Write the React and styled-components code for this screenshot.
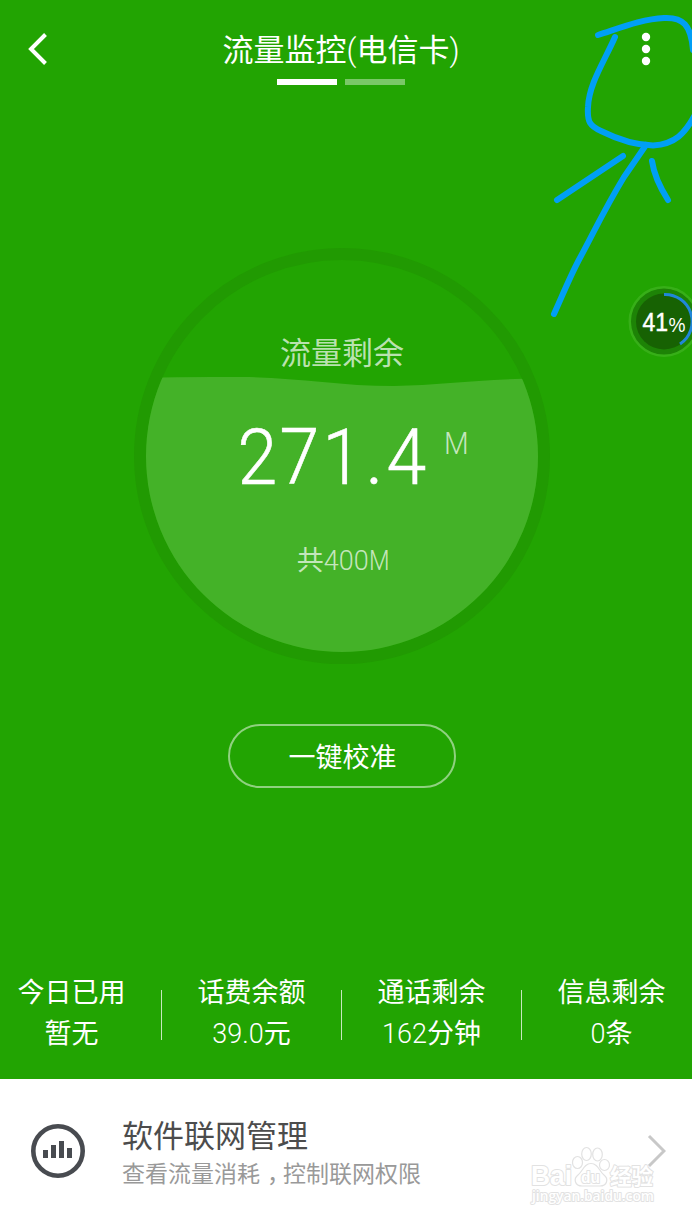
import React from "react";
import styled, { createGlobalStyle } from "styled-components";

const GlobalStyle = createGlobalStyle`
  * { box-sizing: border-box; }
  body {
    margin: 0;
    overflow: hidden;
    background: #fff;
    font-family: Roboto, "Noto Sans CJK SC", sans-serif;
  }
`;

const Screen = styled.main`
  position: relative;
  width: 692px;
  height: 1222px;
  overflow: hidden;
  display: flex;
  justify-content: center;
  color: #fff;
`;

const Page = styled.div`
  flex: none;
  width: 720px;
  margin-right: 8px;
  height: 100%;
  display: flex;
  flex-direction: column;
`;

const Monitor = styled.section`
  height: 1079px;
  flex: none;
  background: #22a402;
  display: flex;
  flex-direction: column;
  align-items: center;
`;

const Header = styled.header`
  width: 100%;
  height: 98px;
  padding: 0 50px 0 46px;
  display: grid;
  grid-template-columns: 60px 1fr 60px;
  align-items: center;
`;

const IconButton = styled.button`
  display: flex;
  justify-content: ${(p) => p.$align || "flex-start"};
  padding: 0;
  border: 0;
  background: none;
`;

const TitleBlock = styled.div`
  height: 98px;
  padding-top: 31px;
  display: flex;
  flex-direction: column;
  align-items: center;
  margin-left: 2px;
`;

const Title = styled.h1`
  margin: 0;
  font-size: 31px;
  line-height: 40px;
  font-weight: 400;
  white-space: nowrap;
`;

const Paren = styled.span`
  font-weight: 300;
`;

const Pager = styled.div`
  display: flex;
  gap: 8px;
  margin-top: 8px;
`;

const PagerBar = styled.span`
  width: 60px;
  height: 6px;
  background: ${(p) => (p.$active ? "#fff" : "#7ac867")};
`;

const Gauge = styled.div`
  display: grid;
  width: 416px;
  height: 416px;
  margin-top: 150px;
  > * { grid-area: 1 / 1; }
`;

const GaugeContent = styled.div`
  z-index: 1;
  display: flex;
  flex-direction: column;
  align-items: center;
`;

const GaugeLabel = styled.div`
  margin-top: 86px;
  font-size: 31px;
  line-height: 40px;
  color: rgba(255, 255, 255, 0.7);
`;

const Amount = styled.div`
  display: flex;
  align-items: flex-start;
  height: 80px;
  margin: 43px 0 0 21px;
  font-size: 77px;
  line-height: 83px;
  font-weight: 300;
`;

const Digits = styled.span`
  display: flex;
  -webkit-text-stroke: 0.6px #fff;
`;

const Digit = styled.span`
  width: 42.5px;
  text-align: center;
  transform: scaleX(0.93);
`;

const Point = styled.span`
  width: 22px;
  padding-left: 1px;
  text-align: center;
`;

const Unit = styled.span`
  margin: 9px 0 0 15px;
  font-size: 31px;
  line-height: 36px;
  color: rgba(255, 255, 255, 0.7);
  transform: scaleX(0.92);
`;

const Total = styled.div`
  margin: 46px 0 0 2px;
  font-size: 27px;
  line-height: 36px;
  color: rgba(255, 255, 255, 0.7);
`;

const NarrowM = styled.span`
  display: inline-block;
  margin-right: -3px;
  transform: scaleX(0.88);
  transform-origin: left;
`;

const Light = styled.span`
  font-weight: 300;
`;

const CalibrateButton = styled.button`
  width: 228px;
  height: 64px;
  margin-top: 60px;
  padding: 5px 0 0 1px;
  border: 2px solid #90d180;
  border-radius: 32px;
  background: none;
  color: #fff;
  font: 400 27px/55px Roboto, "Noto Sans CJK SC", sans-serif;
`;

const Stats = styled.div`
  width: 100%;
  margin-top: auto;
  height: 109px;
  display: grid;
  grid-template-columns: repeat(4, 1fr);
`;

const Stat = styled.div`
  display: flex;
  align-items: flex-start;
  justify-content: center;
  &::after {
    content: "";
    flex: none;
    width: 1px;
    height: 50px;
    margin-top: 20px;
    background: ${(p) => (p.$last ? "transparent" : "rgba(255,255,255,.75)")};
  }
`;

const StatText = styled.div`
  flex: 1;
  padding-top: 3px;
  text-align: center;
  font-size: 27px;
  line-height: 41px;
`;

const Manage = styled.section`
  flex: 1;
  padding: 0 36px 0 49px;
  display: flex;
  align-items: center;
  background: #fff;
`;

const ManageText = styled.div`
  flex: 1;
  margin: 8px 0 0 37px;
`;

const ManageTitle = styled.h2`
  margin: 0;
  font-size: 31px;
  line-height: 40px;
  font-weight: 400;
  color: #4c4c4c;
`;

const ManageHint = styled.p`
  margin: 0;
  font-size: 23px;
  line-height: 35px;
  color: #999;
`;

const Comma = styled.span`
  display: inline-block;
  width: 23px;
  text-indent: 7px;
  font-feature-settings: "halt";
`;

const Overlay = styled.svg`
  position: absolute;
  left: ${(p) => p.$x}px;
  top: ${(p) => p.$y}px;
  pointer-events: none;
`;

const OutlinedText = styled.text`
  font-family: ${(p) => p.$font}, sans-serif;
  font-weight: ${(p) => p.$weight || 700};
  font-size: ${(p) => p.$size}px;
  stroke-width: 2px;
  stroke-linejoin: round;
  paint-order: stroke fill;
`;

const stats = [
  { label: "今日已用", number: "", unit: "暂无" },
  { label: "话费余额", number: "39.0", unit: "元" },
  { label: "通话剩余", number: "162", unit: "分钟" },
  { label: "信息剩余", number: "0", unit: "条" },
];

function GaugeDial() {
  return (
    <svg width="416" height="416" viewBox="0 0 416 416">
      <defs>
        <clipPath id="dial"><circle cx="208" cy="208" r="196" /></clipPath>
      </defs>
      <circle cx="208" cy="208" r="202" fill="none" stroke="#219a02" strokeWidth="12" />
      <path
        clipPath="url(#dial)"
        fill="#44b228"
        d="M0 130 Q30 129 78 129 H108 C160 129 205 138 260 138 C310 137 350 131 416 130 V416 H0Z"
      />
    </svg>
  );
}

function Scribble() {
  return (
    <Overlay $x={530} $y={0} width="162" height="330" fill="none" stroke="#009ff5" strokeWidth="6" strokeLinecap="round" strokeLinejoin="round">
      <path d="M68 35 C90 28 112 19 134 18 C153 17 161 25 163 50" />
      <path d="M85 37 C74 62 59 84 58 107 C57 122 60 126 71 131 C85 138 104 145 123 145.500 C145 144 155 134 166 113" />
      <path d="M116 145 L94 177 C74 210 64 232 51 256 C41 274 34 292 24 314" />
      <path d="M93 156 L69 172 L27 200" />
      <path d="M122 161 C124 175 131 189 138 200" />
    </Overlay>
  );
}

function FloatingBall() {
  return (
    <Overlay $x={626} $y={283} width="66" height="78">
      <circle cx="38" cy="38.500" r="34" fill="none" stroke="#48b82b" strokeOpacity=".55" strokeWidth="3" />
      <circle cx="38" cy="38.500" r="33" fill="#1d8306" />
      <circle cx="38" cy="38.500" r="28" fill="#176203" />
      <path d="M38 11.500 A27 27 0 0 1 54 61" fill="none" stroke="#2087d8" strokeWidth="3" />
      <text x="16.500" y="48" fill="#fff" fontFamily="Liberation Sans, sans-serif" fontSize="25" textLength="25.500" lengthAdjust="spacingAndGlyphs" stroke="#fff" strokeWidth=".5">41</text>
      <text x="42.500" y="49" fill="#fff" fontFamily="Liberation Sans, sans-serif" fontSize="20" textLength="17" lengthAdjust="spacingAndGlyphs">%</text>
    </Overlay>
  );
}

function Watermark() {
  return (
    <Overlay $x={524} $y={1140} width="140" height="70" fill="#fff" stroke="#e2e2e2" strokeWidth="1.200">
      <OutlinedText $font="Liberation Sans" $size={27} x="7" y="45" textLength="41" lengthAdjust="spacingAndGlyphs">Bai</OutlinedText>
      <ellipse cx="53.500" cy="22.500" rx="5" ry="6" />
      <ellipse cx="62.500" cy="14" rx="4.800" ry="6.500" />
      <ellipse cx="73.500" cy="14.500" rx="4.800" ry="6.500" />
      <ellipse cx="80.500" cy="25" rx="5" ry="5.500" />
      <path d="M67 23.500 C60 23.500 59 31 54 35 C49 39 51 46 58 46 H76 C83 46 85 39 80 35 C75 31 74 23.500 67 23.500Z" />
      <OutlinedText $font="Liberation Sans" $size={17} x="57" y="43" textLength="19" lengthAdjust="spacingAndGlyphs">du</OutlinedText>
      <OutlinedText $font="Noto Sans CJK SC" $size={22} x="86" y="44" textLength="43" lengthAdjust="spacingAndGlyphs">经验</OutlinedText>
      <OutlinedText $font="Open Sans" $weight={600} $size={14} x="8" y="61" textLength="122" lengthAdjust="spacingAndGlyphs">jingyan.baidu.com</OutlinedText>
    </Overlay>
  );
}

export default function App() {
  return (
    <>
      <GlobalStyle />
      <Screen>
        <Page>
          <Monitor>
            <Header>
              <IconButton aria-label="返回">
                <svg width="20" height="34" viewBox="0 0 20 34" fill="none" stroke="#fff" strokeWidth="4">
                  <path d="M17.500 2.500 L3 17 L17.500 31.500" />
                </svg>
              </IconButton>
              <TitleBlock>
                <Title>流量监控<Paren>(</Paren>电信卡<Paren>)</Paren></Title>
                <Pager><PagerBar $active /><PagerBar /></Pager>
              </TitleBlock>
              <IconButton aria-label="更多" $align="flex-end">
                <svg width="12" height="34" fill="#fff">
                  <circle cx="6" cy="5" r="4.200" />
                  <circle cx="6" cy="17" r="4.200" />
                  <circle cx="6" cy="29" r="4.200" />
                </svg>
              </IconButton>
            </Header>
            <Gauge>
              <GaugeDial />
              <GaugeContent>
                <GaugeLabel>流量剩余</GaugeLabel>
                <Amount>
                  <Digits>
                    <Digit>2</Digit>
                    <Digit>7</Digit>
                    <Digit>1</Digit>
                    <Point>.</Point>
                    <Digit>4</Digit>
                  </Digits>
                  <Unit>M</Unit>
                </Amount>
                <Total>共<Light>400<NarrowM>M</NarrowM></Light></Total>
              </GaugeContent>
            </Gauge>
            <CalibrateButton>一键校准</CalibrateButton>
            <Stats>
              {stats.map((s, i) => (
                <Stat key={s.label} $last={i === stats.length - 1}>
                  <StatText>
                    <div>{s.label}</div>
                    <div><Light>{s.number}</Light>{s.unit}</div>
                  </StatText>
                </Stat>
              ))}
            </Stats>
          </Monitor>
          <Manage>
            <svg width="54" height="54" viewBox="0 0 54 54">
              <circle cx="27" cy="27" r="24.700" fill="none" stroke="#484b50" strokeWidth="4.600" />
              <path fill="#484b50" d="M12 26h5v8h-5zM20 21h5v13h-5zM28 17h5v17h-5zM36 24h5v10h-5z" />
            </svg>
            <ManageText>
              <ManageTitle>软件联网管理</ManageTitle>
              <ManageHint>查看流量消耗<Comma>，</Comma>控制联网权限</ManageHint>
            </ManageText>
            <svg width="20" height="34" fill="none" stroke="#c8c8c8" strokeWidth="3">
              <path d="M3 2 L18 17 L3 32" />
            </svg>
          </Manage>
        </Page>
        <Scribble />
        <FloatingBall />
        <Watermark />
      </Screen>
    </>
  );
}
